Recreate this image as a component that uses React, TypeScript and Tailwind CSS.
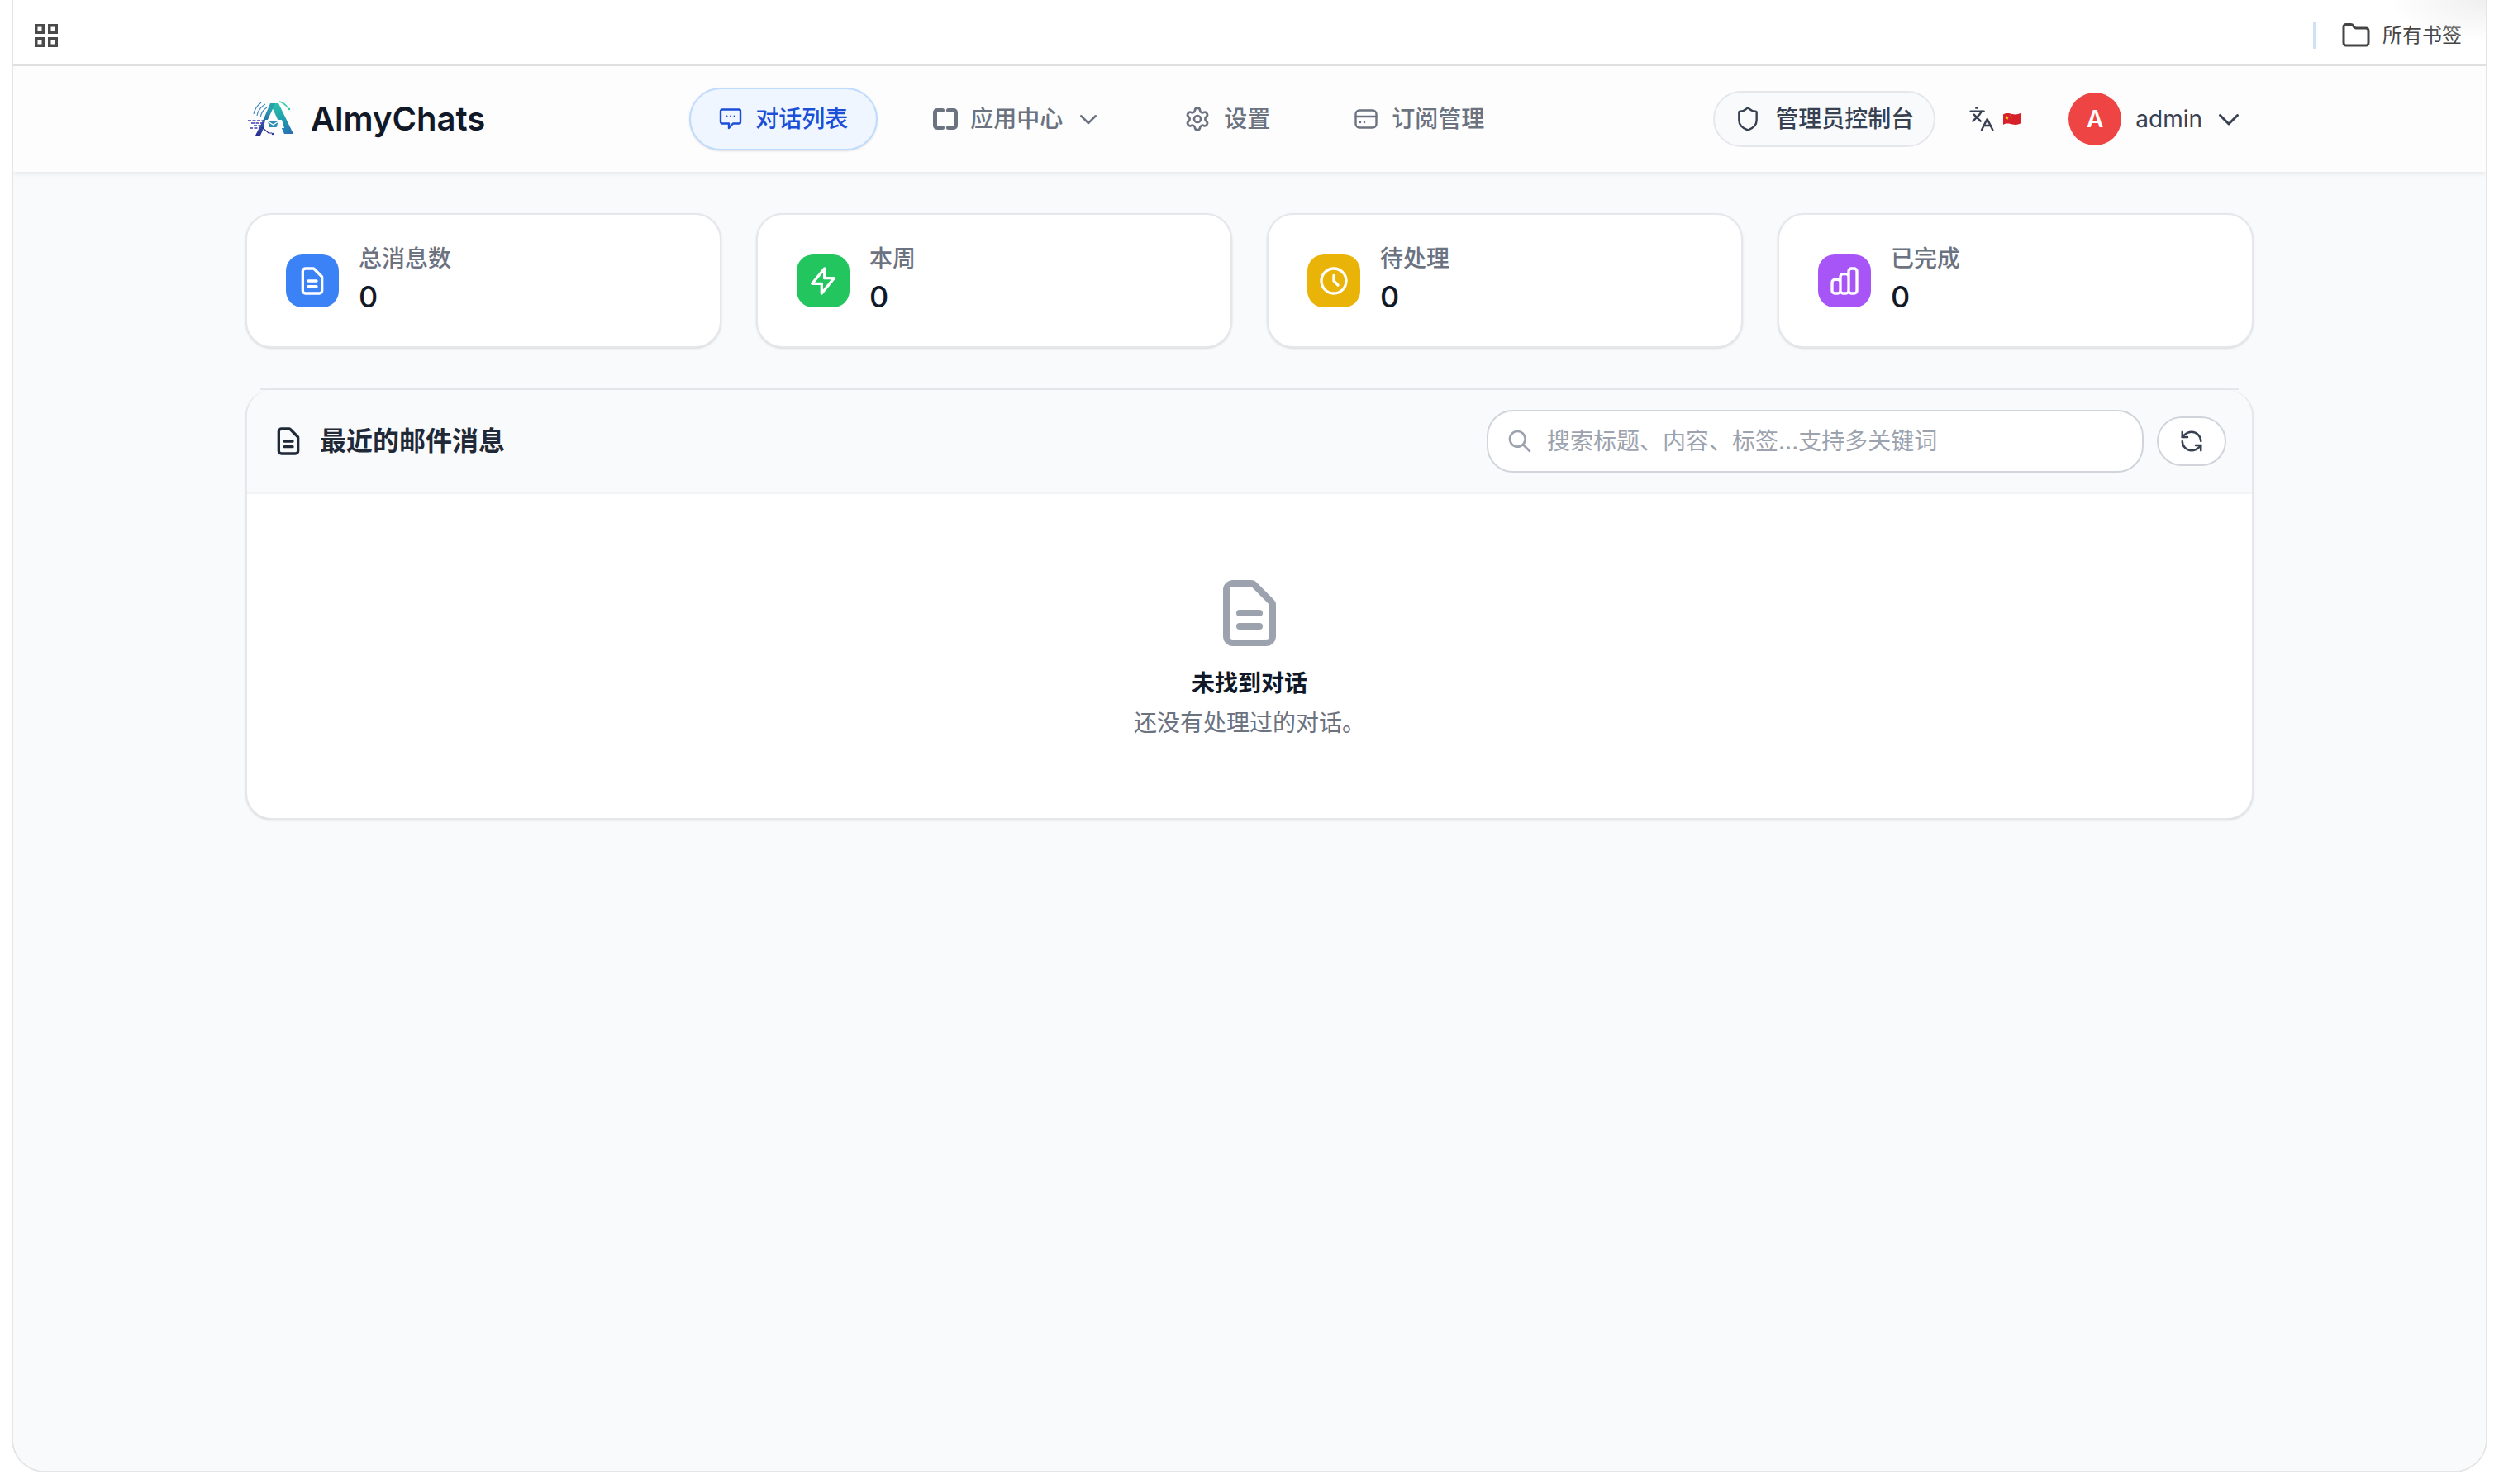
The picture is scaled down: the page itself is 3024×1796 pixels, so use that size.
import { Languages, Settings, Shield, Folder, RefreshCcw } from "lucide-react";

const Chevron = ({ cls }: { cls: string }) => (
  <svg className={cls} viewBox="0 0 24 24" fill="none" stroke="currentColor" strokeWidth={2} strokeLinecap="round" strokeLinejoin="round">
    <path d="M19 9l-7 7-7-7" />
  </svg>
);

const DocIcon = ({ cls, sw = 2 }: { cls: string; sw?: number }) => (
  <svg className={cls} viewBox="0 0 24 24" fill="none" stroke="currentColor" strokeWidth={sw} strokeLinecap="round" strokeLinejoin="round">
    <path d="M9 12h6m-6 4h6m2 5H7a2 2 0 01-2-2V5a2 2 0 012-2h5.586a1 1 0 01.707.293l5.414 5.414a1 1 0 01.293.707V19a2 2 0 01-2 2z" />
  </svg>
);

const BoltIcon = () => (
  <svg className="w-10 h-10 text-white" viewBox="0 0 24 24" fill="none" stroke="currentColor" strokeWidth={2} strokeLinecap="round" strokeLinejoin="round">
    <path d="M13 10V3L4 14h7v7l9-11h-7z" />
  </svg>
);

const ClockIcon = () => (
  <svg className="w-10 h-10 text-white" viewBox="0 0 24 24" fill="none" stroke="currentColor" strokeWidth={2} strokeLinecap="round" strokeLinejoin="round">
    <path d="M12 8v4l3 3m6-3a9 9 0 11-18 0 9 9 0 0118 0z" />
  </svg>
);

const ChartIcon = () => (
  <svg className="w-10 h-10 text-white" viewBox="0 0 24 24" fill="none" stroke="currentColor" strokeWidth={2} strokeLinecap="round" strokeLinejoin="round">
    <path d="M9 19v-6a2 2 0 00-2-2H5a2 2 0 00-2 2v6a2 2 0 002 2h2a2 2 0 002-2zm0 0V9a2 2 0 012-2h2a2 2 0 012 2v10m-6 0a2 2 0 002 2h2a2 2 0 002-2m0 0V5a2 2 0 012-2h2a2 2 0 012 2v14a2 2 0 01-2 2h-2a2 2 0 01-2-2z" />
  </svg>
);

const Logo = () => (
  <svg className="w-[60px] h-[48px]" viewBox="0 0 60 48" fill="none">
    <defs>
      <linearGradient id="lg" x1="30" y1="4" x2="50" y2="44" gradientUnits="userSpaceOnUse">
        <stop offset="0" stopColor="#2cc8a4" />
        <stop offset="0.55" stopColor="#1f9fb0" />
        <stop offset="1" stopColor="#2a6fb2" />
      </linearGradient>
      <linearGradient id="lg2" x1="32" y1="14" x2="12" y2="46" gradientUnits="userSpaceOnUse">
        <stop offset="0" stopColor="#2a9fb0" />
        <stop offset="1" stopColor="#2b2190" />
      </linearGradient>
    </defs>
    <path d="M30 5h10l18 37h-11z" fill="url(#lg)" />
    <path d="M30 5h6l-4 9-14 30h-6l10-20z" fill="url(#lg2)" />
    <path d="M24 25h20l3 10H22z" fill="#fdfdfe" />
    <path d="M27 27h13l-2.500 7H29z" fill="#2d8fb4" />
    <path d="M27 27l6.500 4 6.500-4" stroke="#fdfdfe" strokeWidth="1.400" />
    <path d="M14 20c1-6 5-11 10-14M18 22c1-5 3-9 8-12M10 18c1-6 4-10 9-14" stroke="#3f86bc" strokeWidth="1.100" />
    <path d="M41 3c4 1 8 4 11 8" stroke="#2cc8a4" strokeWidth="1.300" />
    <circle cx="53" cy="12" r="1.200" fill="#2cc8a4" />
    <path d="M3 26h20M7 29h16M10 32h12M5 35h14" stroke="#4338b0" strokeWidth="1.500" strokeDasharray="4 1.500" />
    <path d="M20 34l8 7h4" stroke="#2b2190" strokeWidth="1.100" />
    <circle cx="33" cy="42" r="1.300" fill="#2b3aa0" />
  </svg>
);

const ChatIcon = () => (
  <svg className="w-[28px] h-[28px] text-[#1d4ed8]" viewBox="0 0 28 28" fill="none" stroke="currentColor" strokeWidth={2.400} strokeLinejoin="round">
    <path d="M4 2.500h20a2 2 0 0 1 2 2v13a2 2 0 0 1-2 2h-7l-5 5.500v-5.500H4a2 2 0 0 1-2-2v-13a2 2 0 0 1 2-2z" />
    <path d="M9.500 10.500h.01M14 10.500h.01M18.500 10.500h.01" strokeLinecap="round" strokeWidth={2} />
  </svg>
);

const AppsIcon = () => (
  <svg className="w-[30px] h-[26px] text-[#6b7280]" viewBox="0 0 30 26" fill="none" stroke="currentColor" strokeWidth={5} strokeLinecap="round" strokeLinejoin="round">
    <path d="M11.500 2.500H5a2.500 2.500 0 0 0-2.500 2.500v16a2.500 2.500 0 0 0 2.500 2.500h6.500" />
    <path d="M18.500 2.500H25a2.500 2.500 0 0 1 2.500 2.500v16a2.500 2.500 0 0 1-2.500 2.500h-6.500" />
  </svg>
);

const CardIcon = () => (
  <svg className="w-[28px] h-[24px] text-[#6b7280]" viewBox="0 0 28 24" fill="none" stroke="currentColor" strokeWidth={2.400} strokeLinecap="round">
    <rect x="1.500" y="1.500" width="25" height="21" rx="4.500" />
    <path d="M1.500 9h25" />
    <path d="M7 16h.01M12 16h.01" strokeWidth={2.600} />
  </svg>
);

const GridIcon = () => (
  <svg className="w-[28px] h-[28px] text-[#4a4a4a]" viewBox="0 0 28 28" fill="none" stroke="currentColor" strokeWidth={3.500}>
    <rect x="1.750" y="1.750" width="8.500" height="8.500" />
    <rect x="17.750" y="1.750" width="8.500" height="8.500" />
    <rect x="1.750" y="17.750" width="8.500" height="8.500" />
    <rect x="17.750" y="17.750" width="8.500" height="8.500" />
  </svg>
);

const Flag = () => (
  <svg className="w-[22px] h-[16px]" viewBox="0 0 22 16">
    <path d="M0 2.500C4 0 7 1 11 2s7 .5 11-1.500v12.500c-4 2-7 2.500-11 1.500S4 12.500 0 15z" fill="#d6202a" />
    <path d="M4.500 4l.7 1.700 1.800.1-1.400 1.100.5 1.800-1.600-1-1.500 1 .4-1.800L2 5.800l1.800-.1z" fill="#f7d117" />
    <circle cx="9" cy="3.500" r=".6" fill="#f7d117" />
    <circle cx="10" cy="6" r=".6" fill="#f7d117" />
  </svg>
);

const stats = [
  { label: "总消息数", color: "bg-[#3b82f6]", icon: <DocIcon cls="w-10 h-10 text-white" /> },
  { label: "本周", color: "bg-[#22c55e]", icon: <BoltIcon /> },
  { label: "待处理", color: "bg-[#eab308]", icon: <ClockIcon /> },
  { label: "已完成", color: "bg-[#a855f7]", icon: <ChartIcon /> },
];

export default function App() {
  return (
    <div className="w-[3024px] h-[1796px] bg-white px-[14px] pb-[14px] font-['Inter','Noto_Sans_CJK_SC',sans-serif]">
      <div className="h-full flex flex-col border-x-2 border-b-2 border-[#e5e5e5] rounded-b-[40px] overflow-hidden">
        {/* top bookmark bar */}
        <div className="relative h-[80px] shrink-0 flex items-center bg-white border-b-2 border-[#e2e2e2] pt-[8px] pl-[26px] pr-[29px]">
          <div className="absolute right-0 top-0 w-[120px] h-[50px] bg-[radial-gradient(ellipse_at_top_right,#efefef,transparent_70%)]" />
          <GridIcon />
          <div className="ml-auto w-[3px] h-[32px] bg-[#cfe0f7]" />
          <Folder className="ml-[31px] text-[#444444]" size={36} strokeWidth={2} />
          <span className="ml-[14px] text-[24px] leading-[32px] text-[#444444]">所有书签</span>
        </div>

        {/* nav */}
        <div className="relative z-10 h-[128px] shrink-0 flex items-center bg-[#fdfdfe] shadow-[0_2px_6px_rgba(0,0,0,0.08)] pl-[281px] pr-[293px]">
          <Logo />
          <span className="ml-[19px] text-[40px] leading-[56px] font-semibold text-[#111827]">AlmyChats</span>

          <div className="ml-[247px] h-[76px] flex items-center gap-[16px] px-[34px] rounded-[38px] border-2 border-[#bfdbfe] bg-[#eff6ff] text-[#1d4ed8] shadow-sm">
            <ChatIcon />
            <span className="text-[28px] leading-[40px] font-medium">对话列表</span>
          </div>

          <div className="ml-[67px] flex items-center text-[#6b7280]">
            <AppsIcon />
            <span className="ml-[15px] text-[28px] leading-[40px] font-medium">应用中心</span>
            <Chevron cls="ml-[16px] w-[30px] h-[30px]" />
          </div>

          <div className="ml-[101px] flex items-center gap-[16px] text-[#6b7280]">
            <Settings size={32} strokeWidth={2} />
            <span className="text-[28px] leading-[40px] font-medium">设置</span>
          </div>

          <div className="ml-[102px] flex items-center gap-[17px] text-[#6b7280]">
            <CardIcon />
            <span className="text-[28px] leading-[40px] font-medium">订阅管理</span>
          </div>

          <div className="ml-auto h-[68px] flex items-center gap-[17px] pl-[24px] pr-[24px] rounded-[34px] border-2 border-[#e5e7eb] bg-[#f9fafb] text-[#374151]">
            <Shield size={32} strokeWidth={1.800} />
            <span className="text-[28px] leading-[40px] font-medium">管理员控制台</span>
          </div>

          <div className="ml-[40px] flex items-center gap-[10px] text-[#374151]">
            <Languages size={32} strokeWidth={1.800} />
            <Flag />
          </div>

          <div className="ml-[57px] w-[64px] h-[64px] flex items-center justify-center rounded-full bg-[#ef4444] text-white text-[28px] font-semibold">A</div>
          <span className="ml-[17px] text-[28px] leading-[40px] text-[#374151]">admin</span>
          <Chevron cls="ml-[14px] w-[36px] h-[36px] text-[#374151]" />
        </div>

        {/* main */}
        <div className="flex-1 bg-[#f9fafb] px-[281px] pt-[50px]">
          <div className="grid grid-cols-4 gap-[42px]">
            {stats.map((s) => (
              <div key={s.label} className="h-[163px] flex items-center gap-[24px] pl-[47px] bg-white border-2 border-[#e5e7eb] rounded-[32px] shadow-sm">
                <div className={`w-[64px] h-[64px] flex items-center justify-center rounded-[20px] ${s.color}`}>{s.icon}</div>
                <div className="flex flex-col mb-[8px]">
                  <span className="text-[28px] leading-[40px] font-medium text-[#6b7280]">{s.label}</span>
                  <span className="mt-[6px] text-[36px] leading-[40px] font-medium text-[#111827]">0</span>
                </div>
              </div>
            ))}
          </div>

          <div className="mt-[49px] mx-[18px] h-[2px] bg-[#e5e7eb]" />
          <div className="h-[520px] flex flex-col bg-white border-x-2 border-b-2 border-[#e5e7eb] rounded-[32px] overflow-hidden shadow-sm">
            <div className="h-[126px] shrink-0 flex items-center bg-[#f9fafb] border-b-2 border-[#f3f4f6] pl-[30px] pr-[31px]">
              <DocIcon cls="w-10 h-10 text-[#1f2937]" />
              <span className="ml-[18px] text-[32px] leading-[48px] font-semibold text-[#1f2937]">最近的邮件消息</span>
              <div className="ml-auto w-[795px] h-[76px] flex items-center gap-[17px] pl-[22px] bg-white border-2 border-[#d1d5db] rounded-[32px]">
                <svg className="w-8 h-8 text-[#9ca3af] shrink-0" viewBox="0 0 24 24" fill="none" stroke="currentColor" strokeWidth={2} strokeLinecap="round" strokeLinejoin="round">
                  <path d="M21 21l-6-6m2-5a7 7 0 11-14 0 7 7 0 0114 0z" />
                </svg>
                <input placeholder="搜索标题、内容、标签...支持多关键词" className="flex-1 text-[28px] leading-[40px] outline-none bg-transparent placeholder:text-[#9ca3af]" />
              </div>
              <div className="ml-[16px] w-[84px] h-[60px] flex items-center justify-center bg-white border-2 border-[#d1d5db] rounded-[30px] text-[#374151]">
                <RefreshCcw size={30} strokeWidth={2} />
              </div>
            </div>
            <div className="flex-1 flex flex-col items-center pt-[96px]">
              <DocIcon cls="w-24 h-24 text-[#9ca3af]" />
              <span className="mt-[13px] text-[28px] leading-[48px] font-semibold text-[#111827]">未找到对话</span>
              <span className="text-[28px] leading-[48px] text-[#6b7280]">还没有处理过的对话。</span>
            </div>
          </div>
        </div>
      </div>
    </div>
  );
}
